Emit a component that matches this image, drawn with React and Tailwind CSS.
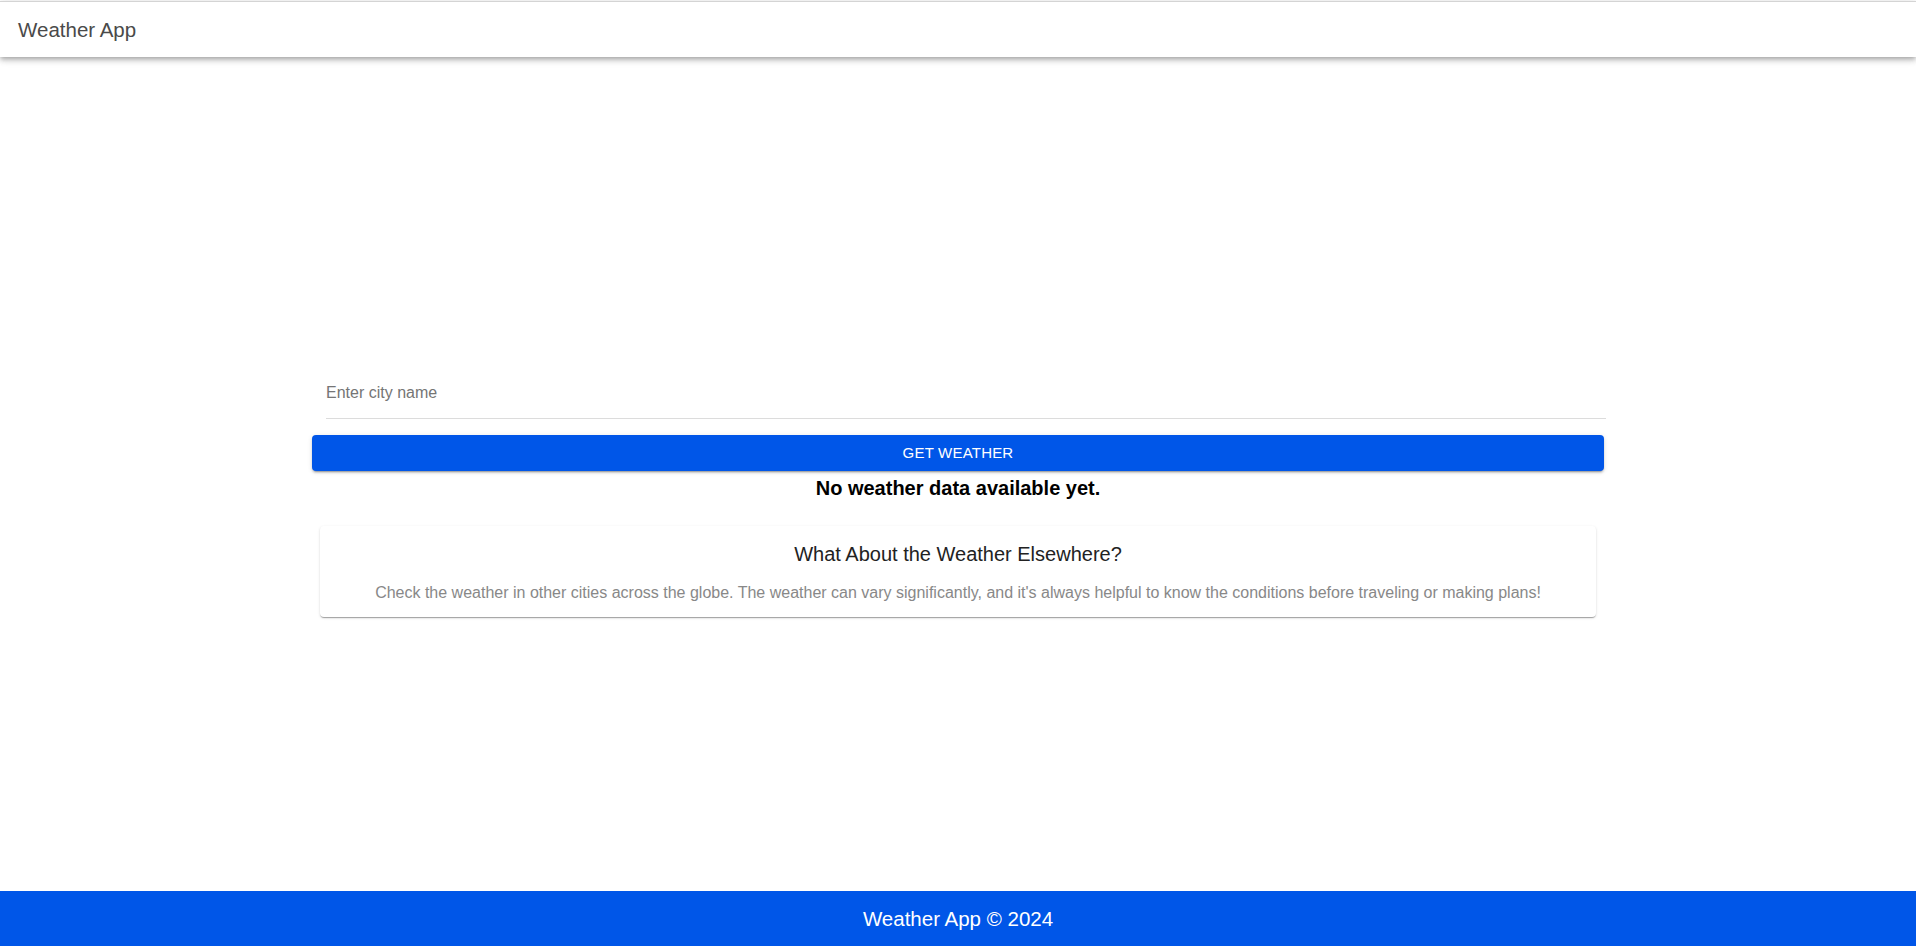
import React from 'react';

const App = () => {
  return (
    <div className="min-h-screen flex flex-col bg-white font-['Liberation_Sans',Arial,sans-serif]">
      <header className="mt-px h-[56px] border-t border-[#d4d4d4] bg-white flex items-center pl-[18px] shadow-[0_2px_4px_-1px_rgba(0,0,0,0.2),0_4px_5px_0_rgba(0,0,0,0.14),0_1px_10px_0_rgba(0,0,0,0.12)] relative z-10">
        <h1 className="text-[20.5px] leading-6 text-[#4a4a4a]">Weather App</h1>
      </header>

      <main className="flex-1 flex flex-col items-center justify-center">
        <div className="w-[1292px] flex flex-col">
          <div className="ml-[14px] w-[1280px] pt-[50px]">
            <input
              type="text"
              placeholder="Enter city name"
              className="w-full h-6 pb-0 text-[16px] leading-6 text-[#222] placeholder:text-[#757575] outline-none bg-transparent"
            />
            <div className="mt-[13px] h-px bg-[#dcdcdc]" />
          </div>
          <button className="mt-4 h-9 w-full rounded bg-[#0056e8] text-white text-[15px] uppercase tracking-[0.2px] shadow-[0_3px_1px_-2px_rgba(0,0,0,0.2),0_2px_2px_0_rgba(0,0,0,0.14),0_1px_5px_0_rgba(0,0,0,0.12)]">
            Get Weather
          </button>
          <p className="mt-[5px] text-center text-[20px] leading-6 font-bold text-black">No weather data available yet.</p>
          <div className="mt-[26px] mx-auto w-[1276px] rounded bg-white pt-[16px] pb-[12px] text-center shadow-[0_2px_1px_-1px_rgba(0,0,0,0.2),0_1px_1px_0_rgba(0,0,0,0.14),0_1px_3px_0_rgba(0,0,0,0.12)]">
            <h2 className="text-[20px] leading-6 text-[#222]">What About the Weather Elsewhere?</h2>
            <p className="mt-[15px] text-[16px] leading-6 text-[#888]">
              Check the weather in other cities across the globe. The weather can vary significantly, and it's always helpful to know the conditions before traveling or making plans!
            </p>
          </div>
        </div>
      </main>

      <footer className="h-[55px] bg-[#0056e8] flex items-center justify-center">
        <p className="text-[20.5px] leading-6 text-white">Weather App © 2024</p>
      </footer>
    </div>
  );
};

export default App;
